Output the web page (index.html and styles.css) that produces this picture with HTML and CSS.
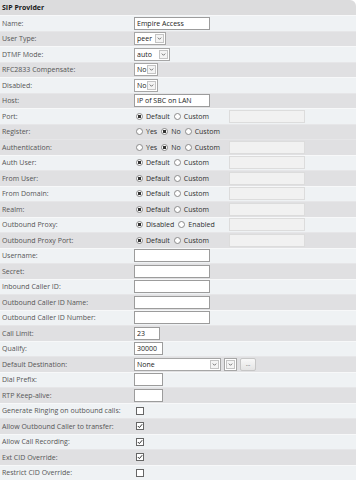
FILE: index.html
```html
<!DOCTYPE html>
<html lang="en">
<head>
<meta charset="UTF-8" />
<meta name="viewport" content="width=device-width, initial-scale=1" />
<title>SIP Provider</title>
<link rel="stylesheet" href="styles.css">
</head>
<body>
  <div class="panel">
    <div class="head">SIP Provider</div>

    <div class="row"><span class="label">Name:</span><input class="text" type="text" value="Empire Access"></div>
    <div class="row alt"><span class="label">User Type:</span><select class="sel w32"><option>peer</option></select></div>
    <div class="row"><span class="label">DTMF Mode:</span><select class="sel w36"><option>auto</option></select></div>
    <div class="row alt"><span class="label">RFC2833 Compensate:</span><select class="sel w24"><option>No</option></select></div>
    <div class="row"><span class="label">Disabled:</span><select class="sel w24"><option>No</option></select></div>
    <div class="row alt"><span class="label">Host:</span><input class="text" type="text" value="IP of SBC on LAN"></div>

    <div class="row"><span class="label">Port:</span>
      <div class="opts"><label><input type="radio" name="port" checked>Default</label><label><input type="radio" name="port">Custom</label></div>
      <input class="text off" type="text" disabled></div>
    <div class="row alt"><span class="label">Register:</span>
      <div class="opts"><label><input type="radio" name="reg">Yes</label><label><input type="radio" name="reg" checked>No</label><label><input type="radio" name="reg">Custom</label></div></div>
    <div class="row alt"><span class="label">Authentication:</span>
      <div class="opts"><label><input type="radio" name="auth">Yes</label><label><input type="radio" name="auth" checked>No</label><label><input type="radio" name="auth">Custom</label></div>
      <input class="text off" type="text" disabled></div>
    <div class="row"><span class="label">Auth User:</span>
      <div class="opts"><label><input type="radio" name="au" checked>Default</label><label><input type="radio" name="au">Custom</label></div>
      <input class="text off" type="text" disabled></div>
    <div class="row alt"><span class="label">From User:</span>
      <div class="opts"><label><input type="radio" name="fu" checked>Default</label><label><input type="radio" name="fu">Custom</label></div>
      <input class="text off" type="text" disabled></div>
    <div class="row"><span class="label">From Domain:</span>
      <div class="opts"><label><input type="radio" name="fd" checked>Default</label><label><input type="radio" name="fd">Custom</label></div>
      <input class="text off" type="text" disabled></div>
    <div class="row alt"><span class="label">Realm:</span>
      <div class="opts"><label><input type="radio" name="realm" checked>Default</label><label><input type="radio" name="realm">Custom</label></div>
      <input class="text off" type="text" disabled></div>
    <div class="row"><span class="label">Outbound Proxy:</span>
      <div class="opts"><label><input type="radio" name="op" checked>Disabled</label><label><input type="radio" name="op">Enabled</label></div>
      <input class="text off" type="text" disabled></div>
    <div class="row alt"><span class="label">Outbound Proxy Port:</span>
      <div class="opts"><label><input type="radio" name="opp" checked>Default</label><label><input type="radio" name="opp">Custom</label></div>
      <input class="text off" type="text" disabled></div>

    <div class="row"><span class="label">Username:</span><input class="text" type="text"></div>
    <div class="row alt"><span class="label">Secret:</span><input class="text" type="password"></div>
    <div class="row"><span class="label">Inbound Caller ID:</span><input class="text" type="text"></div>
    <div class="row alt"><span class="label">Outbound Caller ID Name:</span><input class="text" type="text"></div>
    <div class="row"><span class="label">Outbound Caller ID Number:</span><input class="text" type="text"></div>
    <div class="row alt"><span class="label">Call Limit:</span><input class="text short" type="text" value="23"></div>
    <div class="row"><span class="label">Qualify:</span><input class="text mid" type="text" value="30000"></div>
    <div class="row alt"><span class="label">Default Destination:</span>
      <select class="sel wide"><option>None</option></select>
      <select class="sel tiny"><option></option></select>
      <button class="more">...</button></div>
    <div class="row"><span class="label">Dial Prefix:</span><input class="text mid" type="text"></div>
    <div class="row alt"><span class="label">RTP Keep-alive:</span><input class="text mid" type="text"></div>

    <div class="row"><span class="label">Generate Ringing on outbound calls:</span><input class="check" type="checkbox"></div>
    <div class="row alt"><span class="label">Allow Outbound Caller to transfer:</span><input class="check" type="checkbox" checked></div>
    <div class="row"><span class="label">Allow Call Recording:</span><input class="check" type="checkbox" checked></div>
    <div class="row alt"><span class="label">Ext CID Override:</span><input class="check" type="checkbox" checked></div>
    <div class="row"><span class="label">Restrict CID Override:</span><input class="check" type="checkbox"></div>
  </div>
</body>
</html>
```

FILE: styles.css
```css
body {
  margin: 0;
  background: #fff;
  font-family: "Open Sans", "DejaVu Sans", sans-serif;
  font-size: 7px;
  color: #555;
}
.panel {
  width: 356px;
  border-top-right-radius: 6px;
  overflow: hidden;
}
.head {
  height: 15px;
  line-height: 15px;
  padding-left: 2px;
  background: #dcdcdd;
  font-weight: bold;
  color: #1a1a1a;
}
.row {
  display: flex;
  align-items: center;
  height: 15.5px;
  background: #eff2f4;
  border-top: 1px solid #f7f8f9;
  box-sizing: border-box;
}
.row.alt {
  background: #e0e0e2;
  border-top-color: #e6e6e8;
}
.label {
  width: 132px;
  padding-left: 2px;
  white-space: nowrap;
}
input.text {
  width: 76px;
  height: 13px;
  box-sizing: border-box;
  margin: 0;
  padding: 0 2px;
  border: 1px solid #9c9c9c;
  background: #fff;
  font: inherit;
  color: #222;
}
input.text.short { width: 26px; }
input.text.mid { width: 29px; }
input.text.off {
  margin-left: auto;
  margin-right: 51px;
  background: #f1f1f1;
  border-color: #dcdcdc;
}
.opts {
  display: flex;
  align-items: center;
  gap: 4px;
  padding-left: 2px;
  color: #2e2e2e;
}
.opts label {
  display: flex;
  align-items: center;
  gap: 3px;
}
input[type="radio"] {
  appearance: none;
  width: 7px;
  height: 7px;
  margin: 0;
  border: 1px solid #8a8a8a;
  border-radius: 50%;
  background: #fff;
  box-sizing: border-box;
}
input[type="radio"]:checked {
  background: radial-gradient(circle, #333 0 1.6px, #fff 2px);
}
.sel {
  appearance: none;
  height: 13px;
  box-sizing: border-box;
  margin: 0 3px 0 0;
  padding: 0 0 0 2px;
  border: 1px solid #a6a6a6;
  background: #fff url("data:image/svg+xml,%3Csvg xmlns='http://www.w3.org/2000/svg' width='9' height='9'%3E%3Crect x='0.5' y='0.5' width='8' height='8' fill='%23f4f4f4' stroke='%23c4c4c4'/%3E%3Cpath d='M2.8 3.6 L4.5 5.3 L6.2 3.6' fill='none' stroke='%23666' stroke-width='0.9'/%3E%3C/svg%3E") no-repeat right 1px center;
  font: inherit;
  color: #222;
}
.sel.w32 { width: 32px; }
.sel.w36 { width: 36px; }
.sel.w24 { width: 24px; }
.sel.wide { width: 87px; }
.sel.tiny { width: 13px; }
.more {
  height: 13px;
  width: 16px;
  margin: 0;
  padding: 0;
  border: 1px solid #c6c6c6;
  border-radius: 2px;
  background: linear-gradient(#f8f8f8, #e4e4e4);
  font: inherit;
  font-size: 6px;
  color: #444;
  line-height: 8px;
}
.check {
  appearance: none;
  width: 8px;
  height: 8px;
  margin: 0 0 0 2px;
  border: 1px solid #666;
  background: #fff;
  box-sizing: border-box;
}
.check:checked {
  background: #fff url("data:image/svg+xml,%3Csvg xmlns='http://www.w3.org/2000/svg' width='6' height='6'%3E%3Cpath d='M0.8 3 L2.4 4.6 L5.2 1.2' fill='none' stroke='%23333' stroke-width='1'/%3E%3C/svg%3E") no-repeat center;
}
```
